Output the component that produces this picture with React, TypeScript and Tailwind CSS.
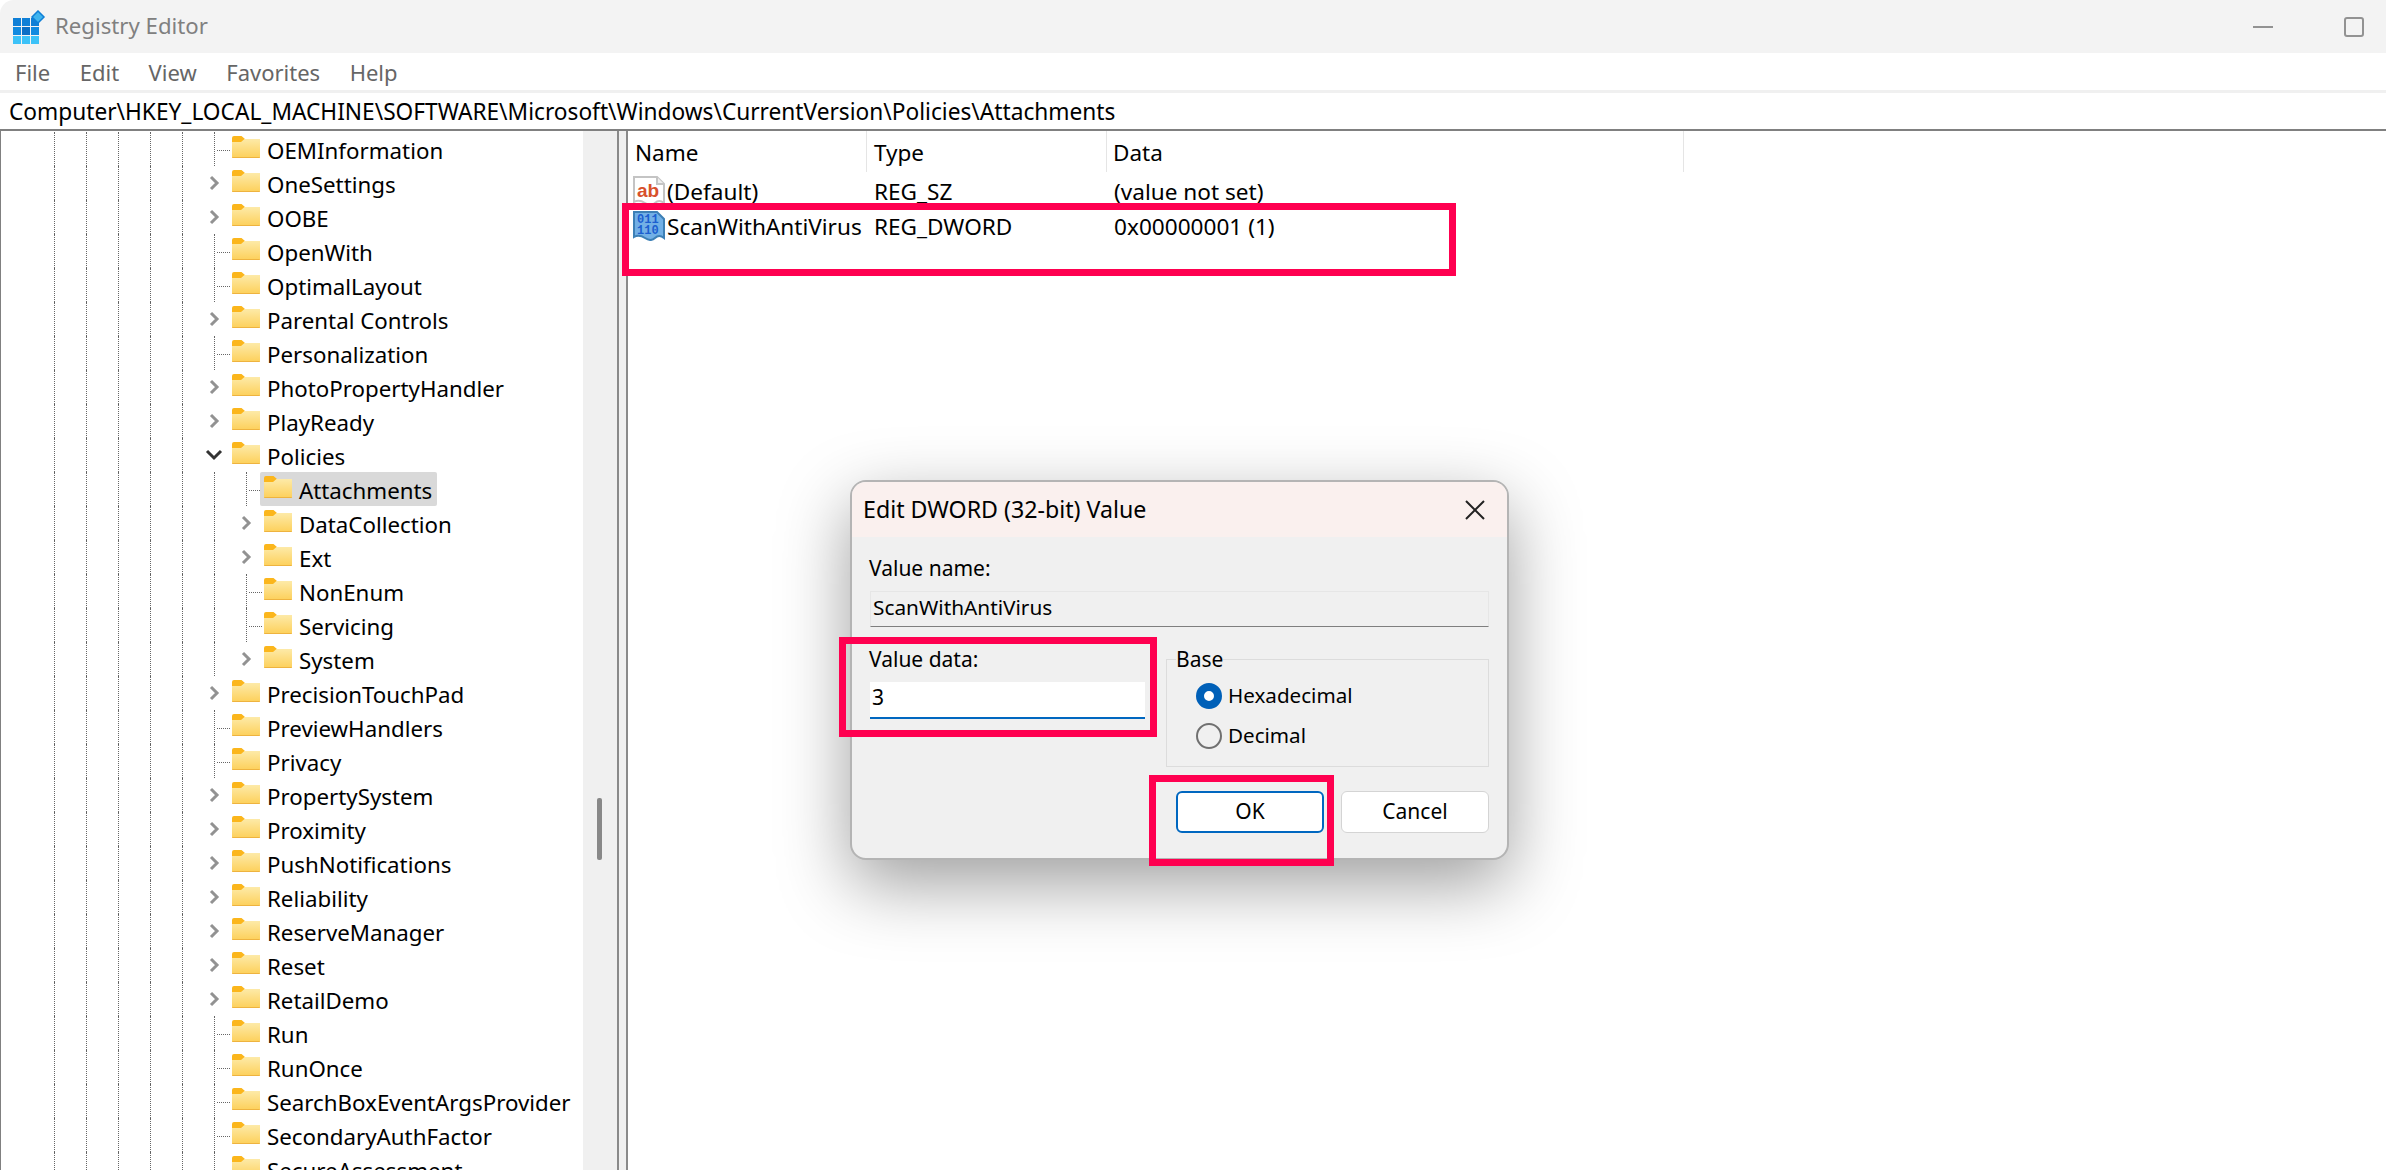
type Kind = "leaf" | "closed" | "open";

const rows: { label: string; kind: Kind; depth?: number; selected?: boolean }[] = [
  { label: "OEMInformation", kind: "leaf" },
  { label: "OneSettings", kind: "closed" },
  { label: "OOBE", kind: "closed" },
  { label: "OpenWith", kind: "leaf" },
  { label: "OptimalLayout", kind: "leaf" },
  { label: "Parental Controls", kind: "closed" },
  { label: "Personalization", kind: "leaf" },
  { label: "PhotoPropertyHandler", kind: "closed" },
  { label: "PlayReady", kind: "closed" },
  { label: "Policies", kind: "open" },
  { label: "Attachments", kind: "leaf", depth: 2, selected: true },
  { label: "DataCollection", kind: "closed", depth: 2 },
  { label: "Ext", kind: "closed", depth: 2 },
  { label: "NonEnum", kind: "leaf", depth: 2 },
  { label: "Servicing", kind: "leaf", depth: 2 },
  { label: "System", kind: "closed", depth: 2 },
  { label: "PrecisionTouchPad", kind: "closed" },
  { label: "PreviewHandlers", kind: "leaf" },
  { label: "Privacy", kind: "leaf" },
  { label: "PropertySystem", kind: "closed" },
  { label: "Proximity", kind: "closed" },
  { label: "PushNotifications", kind: "closed" },
  { label: "Reliability", kind: "closed" },
  { label: "ReserveManager", kind: "closed" },
  { label: "Reset", kind: "closed" },
  { label: "RetailDemo", kind: "closed" },
  { label: "Run", kind: "leaf" },
  { label: "RunOnce", kind: "leaf" },
  { label: "SearchBoxEventArgsProvider", kind: "leaf" },
  { label: "SecondaryAuthFactor", kind: "leaf" },
  { label: "SecureAssessment", kind: "leaf" },
];

const Folder = () => (
  <svg width="28" height="22" viewBox="0 0 28 22" className="shrink-0 mb-[4px]">
    <defs>
      <linearGradient id="folderFront" x1="0" y1="0" x2="0" y2="1">
        <stop offset="0" stopColor="#fdeaa8" />
        <stop offset="1" stopColor="#fdd05a" />
      </linearGradient>
    </defs>
    <path d="M0 2a2 2 0 0 1 2-2h7.5l3.5 3h15v5H0z" fill="#fbb61c" />
    <path d="M0 21V6h9l3.5-3H28v18a1 1 0 0 1-1 1H1a1 1 0 0 1-1-1z" fill="url(#folderFront)" />
    <path d="M0 21h28a1 1 0 0 1-1 1H1a1 1 0 0 1-1-1z" fill="#eeb33f" />
  </svg>
);

const Marker = ({ kind }: { kind: Kind }) => {
  if (kind === "leaf") {
    return (
      <div className="w-[18px] h-full shrink-0 border-l border-dotted border-[#666] flex items-center">
        <div className="w-[13px] ml-[2px] mt-[2px] border-t border-dotted border-[#666]" />
      </div>
    );
  }
  if (kind === "open") {
    return (
      <div className="w-[18px] h-full shrink-0 flex items-center">
        <svg width="18" height="12" viewBox="0 0 18 12" className="-ml-[9px] shrink-0">
          <path d="M2 2l7 7 7-7" fill="none" stroke="#333" strokeWidth="3" />
        </svg>
      </div>
    );
  }
  return (
    <div className="w-[18px] h-full shrink-0 flex items-center">
      <svg width="12" height="16" viewBox="0 0 12 16" className="-ml-[5px] shrink-0">
        <path d="M2 2l6 6-6 6" fill="none" stroke="#929292" strokeWidth="3" />
      </svg>
    </div>
  );
};

const TreeRow = ({ label, kind, depth = 1, selected }: { label: string; kind: Kind; depth?: number; selected?: boolean }) => (
  <div className="flex items-center h-[34px] pl-[53px] shrink-0">
    {[0, 1, 2, 3, 4].map((i) => (
      <div key={i} className="w-[32px] h-full shrink-0 border-l border-dotted border-[#666]" />
    ))}
    {depth === 2 && <div className="w-[32px] h-full shrink-0 border-l border-dotted border-[#666]" />}
    <Marker kind={kind} />
    <div className={selected ? "flex items-center h-full -ml-[4px] pl-[4px] pr-[5px] rounded-[2px] bg-[#d9d9d9]" : "flex items-center h-full"}>
      <Folder />
      <span className="ml-[7px] pt-[3px] whitespace-nowrap text-[22.3px] text-black">{label}</span>
    </div>
  </div>
);

const ValueIcon = ({ kind }: { kind: "sz" | "dword" }) => {
  const page = "M1 1H24L31 8V27Q26 23 22 27T12 27T1 26Z";
  if (kind === "sz") {
    return (
      <svg width="32" height="30" viewBox="0 0 32 30" className="shrink-0">
        <path d={page} fill="#fff" stroke="#c4c4c4" strokeWidth="2" />
        <path d="M24 1V8H31" fill="#eee" stroke="#c4c4c4" strokeWidth="2" />
        <text x="4" y="21" fontFamily="'Liberation Sans', sans-serif" fontSize="19" fontWeight="700" fill="#d8502c">ab</text>
      </svg>
    );
  }
  return (
    <svg width="32" height="30" viewBox="0 0 32 30" className="shrink-0">
      <path d={page} fill="#72b0e6" stroke="#3d80b6" strokeWidth="2" />
      <text x="4" y="12" fontFamily="'Liberation Mono', monospace" fontSize="12" fontWeight="700" fill="#1b5fd0">011</text>
      <text x="4" y="23" fontFamily="'Liberation Mono', monospace" fontSize="12" fontWeight="700" fill="#1b5fd0">110</text>
    </svg>
  );
};

const RegistryIcon = () => (
  <svg width="34" height="34" viewBox="0 0 34 34" className="shrink-0">
    {[0, 1, 2].map((r) =>
      [0, 1, 2].map((c) => (
        <rect
          key={`${r}-${c}`}
          x={1 + c * 9}
          y={8 + r * 9}
          width="8"
          height="8"
          fill={r === 2 ? "#3cc2f8" : r === 1 ? (c === 1 ? "#0b6fc6" : "#118ae0") : "#0f7fd6"}
        />
      ))
    )}
    <path d="M26 1l6 6-6 6-6-6z" fill="#3fb4ee" stroke="#0f7fd6" strokeWidth="1.5" />
  </svg>
);

// red annotation boxes drawn over the screenshot
const Callout = ({ className }: { className: string }) => (
  <div className={`absolute border-[7px] border-[#ff0050] ${className}`} />
);

export default function App() {
  return (
    <div className="relative w-[2386px] h-[1170px] overflow-hidden bg-white text-black font-['Noto_Sans',sans-serif] flex flex-col">
      {/* title bar */}
      <div className="h-[53px] shrink-0 bg-[#f3f3f3] rounded-tl-[14px] flex items-center pl-[12px] pr-[22px]">
        <RegistryIcon />
        <span className="ml-[9px] pb-[2px] text-[22.2px] text-[#808080]">Registry Editor</span>
        <div className="ml-auto flex items-center gap-[71px]">
          <div className="w-[20px] h-[2px] bg-[#929292]" />
          <div className="w-[20px] h-[20px] border-2 border-[#929292] rounded-[3px]" />
        </div>
      </div>

      {/* menu */}
      <div className="h-[37px] shrink-0 flex items-center pl-[15px] pt-[2px] gap-[29.5px] text-[22px] text-[#666]">
        <span>File</span>
        <span>Edit</span>
        <span>View</span>
        <span>Favorites</span>
        <span>Help</span>
      </div>
      <div className="h-[3px] shrink-0 bg-[#f0f0f0]" />

      {/* address bar */}
      <div className="h-[36px] shrink-0 flex items-center pl-[9px] pt-[3px] text-[22.7px] whitespace-nowrap">
        Computer\HKEY_LOCAL_MACHINE\SOFTWARE\Microsoft\Windows\CurrentVersion\Policies\Attachments
      </div>
      <div className="h-[2px] shrink-0 bg-[#808080]" />

      {/* panes */}
      <div className="flex-1 flex min-h-0">
        <div className="w-[583px] shrink-0 border-l border-[#808080] flex flex-col overflow-hidden">
          <div className="h-px shrink-0" />
          {rows.map((r) => (
            <TreeRow key={r.label} {...r} />
          ))}
        </div>
        <div className="w-[34px] shrink-0 bg-[#f0f0f0] pt-[667px] pl-[14px]">
          <div className="w-[5px] h-[62px] bg-[#888] rounded-[2px]" />
        </div>
        <div className="w-[9px] shrink-0 border-l-2 border-[#8a8a8a] bg-[#f0f0f0]" />
        <div className="flex-1 border-l-2 border-[#8a8a8a] bg-white">
          <div className="flex h-[41px] text-[22.5px] items-center">
            <div className="w-[239px] h-full pl-[7px] pt-[2px] flex items-center border-r border-[#e5e5e5]">Name</div>
            <div className="w-[240px] h-full pl-[7px] pt-[2px] flex items-center border-r border-[#e5e5e5]">Type</div>
            <div className="w-[577px] h-full pl-[6px] pt-[2px] flex items-center border-r border-[#e5e5e5]">Data</div>
          </div>
          <div className="flex h-[35px] mt-[2px] text-[22.6px] items-center">
            <div className="w-[239px] pl-[5px] flex items-center"><ValueIcon kind="sz" /><span className="ml-[2px]">(Default)</span></div>
            <div className="w-[240px] pl-[7px]">REG_SZ</div>
            <div className="pl-[7px]">(value not set)</div>
          </div>
          <div className="flex h-[35px] text-[22.6px] items-center">
            <div className="w-[239px] pl-[5px] flex items-center"><ValueIcon kind="dword" /><span className="ml-[2px] whitespace-nowrap">ScanWithAntiVirus</span></div>
            <div className="w-[240px] pl-[7px]">REG_DWORD</div>
            <div className="pl-[7px]">0x00000001 (1)</div>
          </div>
        </div>
      </div>

      {/* edit dialog */}
      <div className="absolute left-[850px] top-[480px] w-[659px] h-[380px] border-2 border-[#b4b4b4] rounded-[16px] bg-[#f0f0f0] overflow-hidden shadow-[0_24px_70px_rgba(0,0,0,0.38)] text-[21px]">
        <div className="h-[55px] bg-[#faf0ee] flex items-center justify-between pl-[11px] pr-[21px]">
          <span className="text-[23.2px]">Edit DWORD (32-bit) Value</span>
          <svg width="22" height="22" viewBox="0 0 22 22">
            <path d="M2 2l18 18M20 2L2 20" stroke="#222" strokeWidth="2" fill="none" />
          </svg>
        </div>
        <div className="px-[18px] pt-[19px]">
          <div className="h-[26px] -ml-px flex items-center">Value name:</div>
          <div className="mt-[9px] h-[36px] border border-[#e6e6e6] border-b-[#7f7f7f] flex items-center pl-[2px] pb-[3px] text-[20.8px]">ScanWithAntiVirus</div>
          <div className="mt-[19px] flex gap-[21px]">
            <div className="w-[275px] shrink-0">
              <div className="h-[26px] pt-[2px] -ml-px flex items-center">Value data:</div>
              <div className="mt-[10px] h-[37px] bg-white border-b-2 border-[#0067c0] flex items-center pl-[2px] pb-[3px]">3</div>
            </div>
            <fieldset className="w-[323px] h-[121px] border border-[#dcdcdc] pl-[29px]">
              <legend className="-ml-[20px] h-[26px] leading-[26px]">Base</legend>
              <div className="mt-[4px] h-[40px] flex items-center gap-[6px] text-[20.6px]">
                <div className="w-[26px] h-[26px] rounded-full border-[8px] border-[#0060b8] bg-white" />
                <span className="-mt-[2px]">Hexadecimal</span>
              </div>
              <div className="h-[40px] flex items-center gap-[6px] text-[20.6px]">
                <div className="w-[26px] h-[26px] rounded-full border-2 border-[#707070]" />
                <span className="-mt-[2px]">Decimal</span>
              </div>
            </fieldset>
          </div>
          <div className="mt-[24px] flex justify-end gap-[17px]">
            <div className="w-[148px] h-[42px] bg-white border-2 border-[#0067c0] rounded-[6px] flex items-center justify-center">OK</div>
            <div className="w-[148px] h-[42px] bg-white border border-[#d4d4d4] rounded-[6px] flex items-center justify-center">Cancel</div>
          </div>
        </div>
      </div>

      <Callout className="left-[622px] top-[203px] w-[834px] h-[73px]" />
      <Callout className="left-[839px] top-[637px] w-[318px] h-[100px]" />
      <Callout className="left-[1149px] top-[775px] w-[185px] h-[91px]" />
    </div>
  );
}
